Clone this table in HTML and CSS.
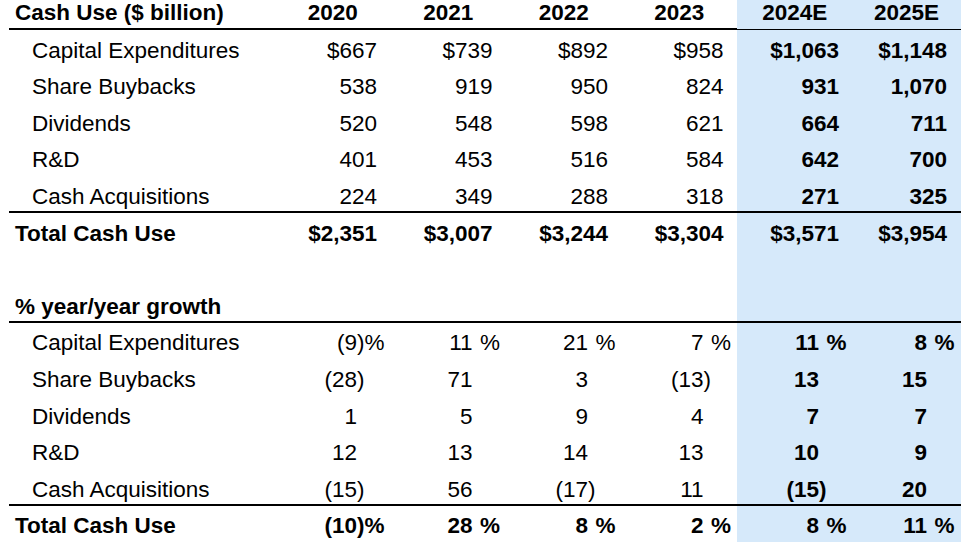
FILE: index.html
```html
<!DOCTYPE html>
<html>
<head>
<meta charset="utf-8">
<link rel="stylesheet" href="styles.css">
</head>
<body>
<div class="sheet">
  <div class="row head line">
    <div class="lbl b">Cash Use ($ billion)</div>
    <div class="hd">2020</div><div class="hd">2021</div><div class="hd">2022</div><div class="hd">2023</div>
    <div class="hd est">2024E</div><div class="hd est">2025E</div>
  </div>

  <div class="row">
    <div class="lbl ind">Capital Expenditures</div>
    <div class="num">$667<i>)</i></div><div class="num">$739<i>)</i></div><div class="num">$892<i>)</i></div><div class="num">$958<i>)</i></div>
    <div class="num est b">$1,063<i>)</i></div><div class="num est b">$1,148<i>)</i></div>
  </div>
  <div class="row">
    <div class="lbl ind">Share Buybacks</div>
    <div class="num">538<i>)</i></div><div class="num">919<i>)</i></div><div class="num">950<i>)</i></div><div class="num">824<i>)</i></div>
    <div class="num est b">931<i>)</i></div><div class="num est b">1,070<i>)</i></div>
  </div>
  <div class="row">
    <div class="lbl ind">Dividends</div>
    <div class="num">520<i>)</i></div><div class="num">548<i>)</i></div><div class="num">598<i>)</i></div><div class="num">621<i>)</i></div>
    <div class="num est b">664<i>)</i></div><div class="num est b">711<i>)</i></div>
  </div>
  <div class="row">
    <div class="lbl ind">R&amp;D</div>
    <div class="num">401<i>)</i></div><div class="num">453<i>)</i></div><div class="num">516<i>)</i></div><div class="num">584<i>)</i></div>
    <div class="num est b">642<i>)</i></div><div class="num est b">700<i>)</i></div>
  </div>
  <div class="row line">
    <div class="lbl ind">Cash Acquisitions</div>
    <div class="num">224<i>)</i></div><div class="num">349<i>)</i></div><div class="num">288<i>)</i></div><div class="num">318<i>)</i></div>
    <div class="num est b">271<i>)</i></div><div class="num est b">325<i>)</i></div>
  </div>
  <div class="row">
    <div class="lbl b">Total Cash Use</div>
    <div class="num b">$2,351<i>)</i></div><div class="num b">$3,007<i>)</i></div><div class="num b">$3,244<i>)</i></div><div class="num b">$3,304<i>)</i></div>
    <div class="num est b">$3,571<i>)</i></div><div class="num est b">$3,954<i>)</i></div>
  </div>

  <div class="row">
    <div class="lbl"></div>
    <div class="num"></div><div class="num"></div><div class="num"></div><div class="num"></div>
    <div class="num est"></div><div class="num est"></div>
  </div>

  <div class="row line">
    <div class="lbl b">% year/year growth</div>
    <div class="num"></div><div class="num"></div><div class="num"></div><div class="num"></div>
    <div class="num est"></div><div class="num est"></div>
  </div>
  <div class="row">
    <div class="lbl ind">Capital Expenditures</div>
    <div class="num">(9)%</div><div class="num">11<i>)</i>%</div><div class="num">21<i>)</i>%</div><div class="num">7<i>)</i>%</div>
    <div class="num est b">11<i>)</i>%</div><div class="num est b">8<i>)</i>%</div>
  </div>
  <div class="row">
    <div class="lbl ind">Share Buybacks</div>
    <div class="num">(28)<i>%</i></div><div class="num">71<i>)%</i></div><div class="num">3<i>)%</i></div><div class="num">(13)<i>%</i></div>
    <div class="num est b">13<i>)%</i></div><div class="num est b">15<i>)%</i></div>
  </div>
  <div class="row">
    <div class="lbl ind">Dividends</div>
    <div class="num">1<i>)%</i></div><div class="num">5<i>)%</i></div><div class="num">9<i>)%</i></div><div class="num">4<i>)%</i></div>
    <div class="num est b">7<i>)%</i></div><div class="num est b">7<i>)%</i></div>
  </div>
  <div class="row">
    <div class="lbl ind">R&amp;D</div>
    <div class="num">12<i>)%</i></div><div class="num">13<i>)%</i></div><div class="num">14<i>)%</i></div><div class="num">13<i>)%</i></div>
    <div class="num est b">10<i>)%</i></div><div class="num est b">9<i>)%</i></div>
  </div>
  <div class="row line">
    <div class="lbl ind">Cash Acquisitions</div>
    <div class="num">(15)<i>%</i></div><div class="num">56<i>)%</i></div><div class="num">(17)<i>%</i></div><div class="num">11<i>)%</i></div>
    <div class="num est b">(15)<i>%</i></div><div class="num est b">20<i>)%</i></div>
  </div>
  <div class="row">
    <div class="lbl b">Total Cash Use</div>
    <div class="num b">(10)%</div><div class="num b">28<i>)</i>%</div><div class="num b">8<i>)</i>%</div><div class="num b">2<i>)</i>%</div>
    <div class="num est b">8<i>)</i>%</div><div class="num est b">11<i>)</i>%</div>
  </div>
</div>
</body>
</html>
```

FILE: styles.css
```css
html, body {
  margin: 0;
  padding: 0;
  background: #ffffff;
}

.sheet {
  padding-left: 9px;
  font-family: "Liberation Sans", Arial, sans-serif;
  font-size: 22.5px;
  line-height: 26px;
  color: #000;
}

.row {
  display: grid;
  grid-template-columns: 266px repeat(5, 115.5px) 108px;
  width: 951.5px;
  height: 36.6px;
  box-sizing: border-box;
}

.row > div {
  display: flex;
  align-items: flex-end;
  padding-bottom: 3px;
  white-space: nowrap;
}

.row.line {
  border-bottom: 2px solid #000;
}

.row.line > div {
  padding-bottom: 1px;
}

.row.head {
  height: 30px;
}

.row.head > div {
  padding-bottom: 3px;
}

.lbl {
  padding-left: 6px;
}

.lbl.ind {
  padding-left: 23px;
}

.b {
  font-weight: bold;
}

.hd {
  font-weight: bold;
  justify-content: center;
}

.num {
  justify-content: flex-end;
  padding-right: 6px;
}

.est {
  background: #d6e9fa;
}

.num i {
  font-style: normal;
  visibility: hidden;
}
```
